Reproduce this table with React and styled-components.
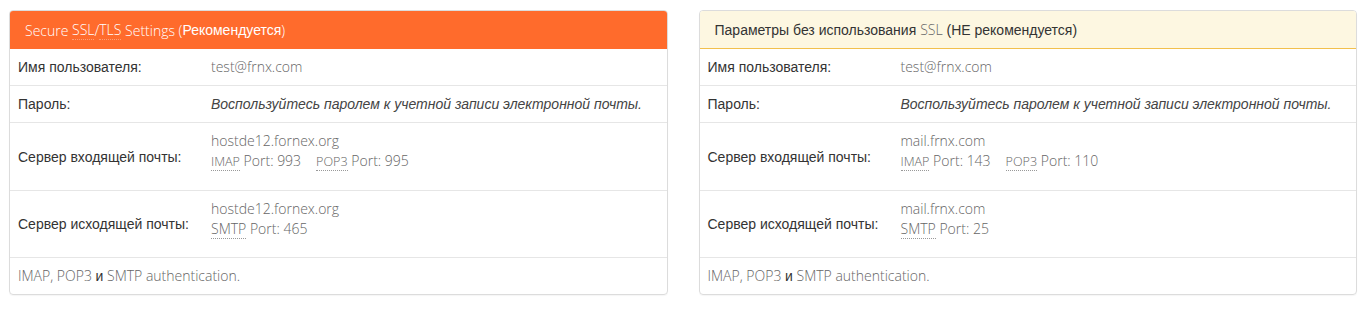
import React from "react";
import styled, { createGlobalStyle } from "styled-components";

const GlobalStyle = createGlobalStyle`
  body {
    margin: 0;
    background: #fff;
    font-family: "Open Sans", "Liberation Sans", sans-serif;
    font-weight: 300;
    color: #666;
  }
`;

const Page = styled.div`
  display: grid;
  grid-template-columns: 1fr 1fr;
  gap: 31px;
  padding: 10px 9px 14px 9px;
`;

const Card = styled.div`
  border: 1px solid #dcdcdc;
  border-radius: 4px;
  overflow: hidden;
  box-shadow: 0 1px 1px rgba(0, 0, 0, 0.04);
`;

const Head = styled.div`
  height: 38px;
  display: flex;
  align-items: center;
  padding: 0 15px;
  font-size: 14px;
  background: ${(p) => (p.$warn ? "#fdf7e1" : "#ff6b2c")};
  color: ${(p) => (p.$warn ? "#333" : "#fff")};
  border-bottom: ${(p) => (p.$warn ? "1px solid #f2c04d" : "none")};
  box-sizing: border-box;
`;

const Ru = styled.span`
  font-family: "Liberation Sans", Arial, sans-serif;
  font-weight: 400;
  color: ${(p) => p.$color || "inherit"};
`;

const Abbr = styled.abbr`
  text-decoration: none;
  border-bottom: 1px dotted ${(p) => (p.$light ? "rgba(255,255,255,0.35)" : "#999")};
  font-size: ${(p) => (p.$small ? "90%" : "inherit")};
  cursor: help;
`;

const Row = styled.div`
  display: flex;
  align-items: center;
  border-top: 1px solid #e6e6e6;
  padding: 8px 8px;
  &:first-of-type {
    border-top: none;
  }
`;

const Label = styled.div`
  width: 193px;
  flex-shrink: 0;
  font-family: "Liberation Sans", Arial, sans-serif;
  font-weight: 400;
  font-size: 14px;
  color: #333;
`;

const Value = styled.div`
  font-size: 14px;
  line-height: 20px;
  color: #666;
  padding-bottom: ${(p) => (p.$tall ? "10px" : "0")};
`;

const Italic = styled.span`
  font-family: "Liberation Sans", Arial, sans-serif;
  font-style: italic;
  font-weight: 400;
  font-size: 14px;
  color: #444;
`;

const Port = styled.span`
  margin-right: 15px;
`;

const Foot = styled.div`
  border-top: 1px solid #e6e6e6;
  padding: 8px 8px;
  font-size: 14px;
  line-height: 20px;
  color: #666;
`;

const Body = styled.div``;

const panels = [
  {
    warn: false,
    user: "test@frnx.com",
    incoming: "hostde12.fornex.org",
    outgoing: "hostde12.fornex.org",
    imap: 993,
    pop3: 995,
    smtp: 465,
  },
  {
    warn: true,
    user: "test@frnx.com",
    incoming: "mail.frnx.com",
    outgoing: "mail.frnx.com",
    imap: 143,
    pop3: 110,
    smtp: 25,
  },
];

const Panel = ({ p }) => (
  <Card>
    {p.warn ? (
      <Head $warn>
        <Ru>Параметры без использования&nbsp;</Ru>
        <span style={{ color: "#666" }}>SSL</span>
        <Ru>&nbsp;(НЕ рекомендуется)</Ru>
      </Head>
    ) : (
      <Head>
        Secure&nbsp;<Abbr $light>SSL</Abbr>/<Abbr $light>TLS</Abbr>&nbsp;Settings (
        <Ru>Рекомендуется</Ru>)
      </Head>
    )}
    <Body>
      <Row>
        <Label>Имя пользователя:</Label>
        <Value>{p.user}</Value>
      </Row>
      <Row>
        <Label>Пароль:</Label>
        <Value>
          <Italic>Воспользуйтесь паролем к учетной записи электронной почты.</Italic>
        </Value>
      </Row>
      <Row>
        <Label>Сервер входящей почты:</Label>
        <Value $tall>
          {p.incoming}
          <br />
          <Port>
            <Abbr $small>IMAP</Abbr> Port: {p.imap}
          </Port>
          <Abbr $small>POP3</Abbr> Port: {p.pop3}
        </Value>
      </Row>
      <Row>
        <Label>Сервер исходящей почты:</Label>
        <Value $tall>
          {p.outgoing}
          <br />
          <Abbr>SMTP</Abbr> Port: {p.smtp}
        </Value>
      </Row>
    </Body>
    <Foot>
      IMAP, POP3 <Ru $color="#333">и</Ru> SMTP authentication.
    </Foot>
  </Card>
);

export default function App() {
  return (
    <>
      <GlobalStyle />
      <Page>
        {panels.map((p, i) => (
          <Panel key={i} p={p} />
        ))}
      </Page>
    </>
  );
}
